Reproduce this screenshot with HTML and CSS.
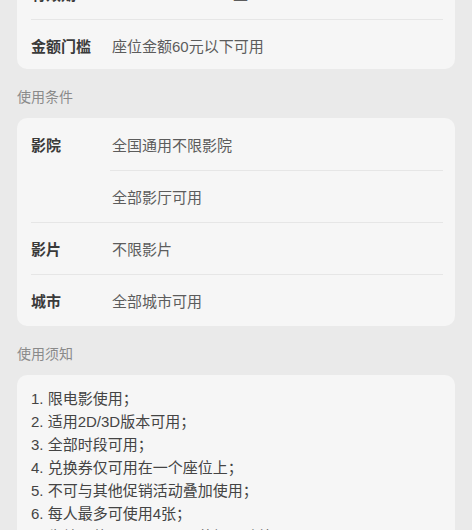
FILE: index.html
```html
<!DOCTYPE html>
<html lang="zh-CN">
<head>
  <meta charset="UTF-8">
  <meta name="viewport" content="width=device-width, initial-scale=1.0">
  <title>兑换券详情</title>
  <link rel="stylesheet" href="styles.css">
</head>
<body>
  <div class="page">
    <div class="card">
      <div class="row">
        <span class="label">有效期</span>
        <span class="value">2023.10.01 00:00 至 2024.09.30 23:59</span>
      </div>
      <div class="row last">
        <span class="label">金额门槛</span>
        <span class="value">座位金额60元以下可用</span>
      </div>
    </div>

    <div class="section-title">使用条件</div>
    <div class="card">
      <div class="row">
        <span class="label">影院</span>
        <span class="value">全国通用不限影院</span>
      </div>
      <div class="row sub">
        <span class="label"></span>
        <span class="value">全部影厅可用</span>
      </div>
      <div class="row">
        <span class="label">影片</span>
        <span class="value">不限影片</span>
      </div>
      <div class="row">
        <span class="label">城市</span>
        <span class="value">全部城市可用</span>
      </div>
    </div>

    <div class="section-title">使用须知</div>
    <div class="card notes">
      <p>1. 限电影使用；</p>
      <p>2. 适用2D/3D版本可用；</p>
      <p>3. 全部时段可用；</p>
      <p>4. 兑换券仅可用在一个座位上；</p>
      <p>5. 不可与其他促销活动叠加使用；</p>
      <p>6. 每人最多可使用4张；</p>
      <p>7. 失效退款：周一至五，节假日除外；</p>
    </div>
  </div>
</body>
</html>
```

FILE: styles.css
```css
body {
  margin: 0;
  background-color: #eaeaea;
  font-family: "Liberation Sans", "Noto Sans CJK SC", sans-serif;
  color: #333;
}
.page {
  margin-top: -33px;
  padding: 0 17px;
}
.card {
  background-color: #f6f6f6;
  border-radius: 10px;
  padding: 0 12px 0 14px;
}
.row {
  box-sizing: border-box;
  display: flex;
  align-items: center;
  height: 52px;
  font-size: 15px;
  position: relative;
}
.row + .row {
  border-top: 1px solid #e6e6e6;
}
.row.last {
  height: 50px;
  padding-top: 2px;
}
.row.sub {
  border-top: none;
}
/* the second cinema line only gets a rule under the value column */
.row.sub::before {
  content: "";
  position: absolute;
  top: 0;
  left: 79px;
  right: 0;
  border-top: 1px solid #e6e6e6;
}
.label {
  width: 81px;
  flex-shrink: 0;
  font-weight: 600;
  color: #3a3a3a;
}
.value {
  color: #5c5c5c;
}
.section-title {
  margin: 18px 0 11px;
  line-height: 20px;
  font-size: 14px;
  color: #8a8a8a;
}
.notes {
  padding-top: 12px;
  padding-bottom: 12px;
}
.notes p {
  margin: 0;
  font-size: 15px;
  line-height: 23px;
  color: #444;
}
```
